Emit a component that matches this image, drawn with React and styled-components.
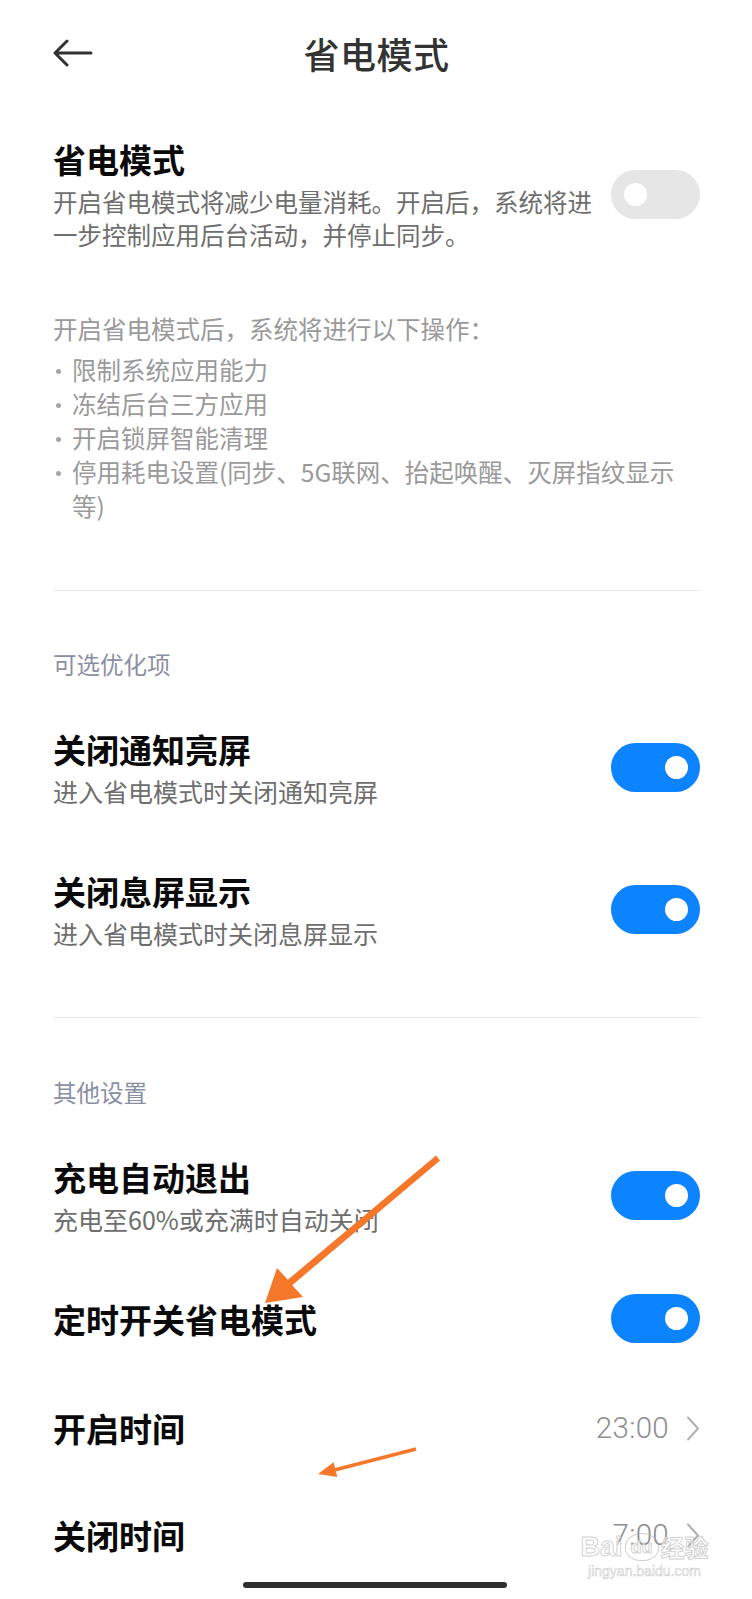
import React from "react";
import styled, { createGlobalStyle } from "styled-components";

const GlobalStyle = createGlobalStyle`
  html, body { margin: 0; padding: 0; background: #ffffff; }
  body { font-family: "Noto Sans CJK SC", "Noto Sans", sans-serif; -webkit-font-smoothing: antialiased; }
  * { box-sizing: border-box; }
`;

const Page = styled.div`
  position: relative;
  width: 752px;
  height: 1599px;
  overflow: hidden;
  background: #ffffff;
`;

const Header = styled.header`
  display: grid;
  grid-template-columns: 1fr auto 1fr;
  align-items: center;
  height: 106px;
  padding: 0 52px 0 53px;
`;

const BackButton = styled.button`
  justify-self: start;
  display: flex;
  align-items: center;
  padding: 0;
  border: 0;
  background: none;
  width: 40px;
  height: 28px;
  cursor: pointer;
`;

const Title = styled.h1`
  margin: 0;
  font-size: 36px;
  line-height: 48px;
  font-weight: 500;
  color: #333333;
  letter-spacing: 0.5px;
`;

const Content = styled.main`
  padding: 0 52px 0 53px;
`;

const Row = styled.div`
  display: flex;
  align-items: center;
  justify-content: space-between;
  gap: 12px;
  padding: ${(p) => p.$pad || "30px 0 31px"};
`;

const RowText = styled.div`
  display: flex;
  flex-direction: column;
  max-width: ${(p) => p.$max || "none"};
`;

const RowTitle = styled.div`
  font-size: 33px;
  line-height: 44px;
  font-weight: 700;
  color: #0a0a0a;
`;

const RowSub = styled.div`
  margin-top: 4px;
  font-size: ${(p) => p.$size || "25px"};
  line-height: 33px;
  color: #6e6e6e;
`;

const Toggle = styled.div`
  position: relative;
  flex: none;
  width: 89px;
  height: 49px;
  border-radius: 25px;
  background: ${(p) => (p.$on ? "#0d84ff" : "#e6e6e6")};
  &::after {
    content: "";
    position: absolute;
    top: 13px;
    left: ${(p) => (p.$on ? "54px" : "13px")};
    width: 23px;
    height: 23px;
    border-radius: 50%;
    background: #ffffff;
  }
`;

const Info = styled.section`
  padding: 31px 0 67px;
  color: #9a9a9a;
  font-size: 24.5px;
`;

const InfoIntro = styled.div`
  line-height: 34px;
`;

const BulletList = styled.ul`
  margin: 7px 0 0;
  padding: 0;
  list-style: none;
`;

const BulletItem = styled.li`
  display: flex;
  align-items: center;
  line-height: 34px;
`;

const Dot = styled.span`
  flex: none;
  align-self: flex-start;
  display: flex;
  align-items: center;
  width: 19px;
  height: 34px;
  &::before {
    content: "";
    width: 5px;
    height: 5px;
    margin-left: 3px;
    margin-top: 2px;
    border-radius: 50%;
    background: #a5a5a5;
  }
`;

const BulletText = styled.span`
  max-width: 612px;
`;

const Divider = styled.hr`
  margin: ${(p) => p.$top || "0"} 0 0;
  border: 0;
  height: 1px;
  background: #e8e8e8;
`;

const SectionLabel = styled.div`
  margin-top: ${(p) => p.$top || "56px"};
  padding-bottom: 16px;
  font-size: 23.5px;
  line-height: 34px;
  color: #8a90a3;
`;

const ValueWrap = styled.div`
  display: flex;
  align-items: center;
  gap: 17px;
`;

const ValueText = styled.span`
  font-family: Roboto, "Noto Sans", sans-serif;
  font-size: 29.5px;
  font-weight: 300;
  color: #8e8e8e;
  letter-spacing: 0.3px;
`;

const HomeIndicator = styled.div`
  position: absolute;
  left: 243px;
  bottom: 11px;
  width: 264px;
  height: 6px;
  border-radius: 3px;
  background: #2e2e2e;
`;

const Annotation = styled.svg`
  position: absolute;
  left: 0;
  top: 0;
  pointer-events: none;
`;

const Watermark = styled.div`
  position: absolute;
  left: 577px;
  top: 1532px;
  width: 135px;
  display: flex;
  flex-direction: column;
  align-items: center;
  color: rgba(255, 255, 255, 0.6);
  -webkit-text-stroke: 1px rgba(170, 170, 170, 0.55);
  font-family: "Liberation Sans", Arial, sans-serif;
  pointer-events: none;
`;

const WmMain = styled.div`
  display: flex;
  align-items: center;
  gap: 2px;
  font-size: 27px;
  line-height: 30px;
  font-weight: 700;
`;

const WmPaw = styled.span`
  display: inline-flex;
  align-items: center;
  justify-content: center;
  width: 34px;
  height: 28px;
  border: 1.5px solid rgba(170, 170, 170, 0.55);
  border-radius: 50% 50% 45% 45%;
  font-size: 18px;
`;

const WmCjk = styled.span`
  font-family: "Noto Sans CJK SC", sans-serif;
  font-size: 24px;
`;

const WmUrl = styled.div`
  font-size: 14px;
  line-height: 16px;
  margin-top: 1px;
  -webkit-text-stroke: 0.6px rgba(170, 170, 170, 0.6);
`;

const BackIcon = () => (
  <svg width="40" height="28" viewBox="0 0 40 28" fill="none">
    <path d="M2 14H38M14 2L2 14L14 26" stroke="#333" strokeWidth="3" strokeLinecap="round" strokeLinejoin="round" />
  </svg>
);

const Chevron = () => (
  <svg width="14" height="25" viewBox="0 0 14 25" fill="none">
    <path d="M2 1.5L12 12.5L2 23.5" stroke="#b0b0b0" strokeWidth="2" strokeLinecap="round" strokeLinejoin="round" />
  </svg>
);

const SwitchRow = ({ title, sub, on, pad, subSize, max }) => (
  <Row $pad={pad}>
    <RowText $max={max}>
      <RowTitle>{title}</RowTitle>
      {sub && <RowSub $size={subSize}>{sub}</RowSub>}
    </RowText>
    <Toggle $on={on} />
  </Row>
);

const bullets = [
  "限制系统应用能力",
  "冻结后台三方应用",
  "开启锁屏智能清理",
  "停用耗电设置(同步、5G联网、抬起唤醒、灭屏指纹显示等)",
];

export default function App() {
  return (
    <Page>
      <GlobalStyle />
      <Header>
        <BackButton aria-label="返回">
          <BackIcon />
        </BackButton>
        <Title>省电模式</Title>
        <span />
      </Header>
      <Content>
        <SwitchRow
          title="省电模式"
          sub="开启省电模式将减少电量消耗。开启后，系统将进一步控制应用后台活动，并停止同步。"
          subSize="24.5px"
          max="552px"
          on={false}
          pad="31px 0 30px"
        />
        <Info>
          <InfoIntro>开启省电模式后，系统将进行以下操作：</InfoIntro>
          <BulletList>
            {bullets.map((b) => (
              <BulletItem key={b}>
                <Dot />
                <BulletText>{b}</BulletText>
              </BulletItem>
            ))}
          </BulletList>
        </Info>
        <Divider />
        <SectionLabel>可选优化项</SectionLabel>
        <SwitchRow title="关闭通知亮屏" sub="进入省电模式时关闭通知亮屏" on />
        <SwitchRow title="关闭息屏显示" sub="进入省电模式时关闭息屏显示" on />
        <Divider $top="36px" />
        <SectionLabel $top="57px">其他设置</SectionLabel>
        <SwitchRow title="充电自动退出" sub="充电至60%或充满时自动关闭" on />
        <SwitchRow title="定时开关省电模式" on pad="27px 0 33px" />
        <Row $pad="30px 0 33px">
          <RowTitle>开启时间</RowTitle>
          <ValueWrap>
            <ValueText>23:00</ValueText>
            <Chevron />
          </ValueWrap>
        </Row>
        <Row $pad="30px 0 33px">
          <RowTitle>关闭时间</RowTitle>
          <ValueWrap>
            <ValueText>7:00</ValueText>
            <Chevron />
          </ValueWrap>
        </Row>
      </Content>
      <Annotation width="752" height="1599" viewBox="0 0 752 1599">
        <polygon
          points="440,1160.5 292.2,1285.2 303,1297 265,1303 277,1268 287.8,1279.8 436,1155.5"
          fill="#f5782a"
        />
        <polygon
          points="416.4,1450.7 335.9,1471.4 337.4,1477 318,1474 333.6,1462.3 335.1,1467.9 415.6,1447.3"
          fill="#f5782a"
        />
      </Annotation>
      <Watermark>
        <WmMain>
          <span>Bai</span>
          <WmPaw>du</WmPaw>
          <WmCjk>经验</WmCjk>
        </WmMain>
        <WmUrl>jingyan.baidu.com</WmUrl>
      </Watermark>
      <HomeIndicator />
    </Page>
  );
}
